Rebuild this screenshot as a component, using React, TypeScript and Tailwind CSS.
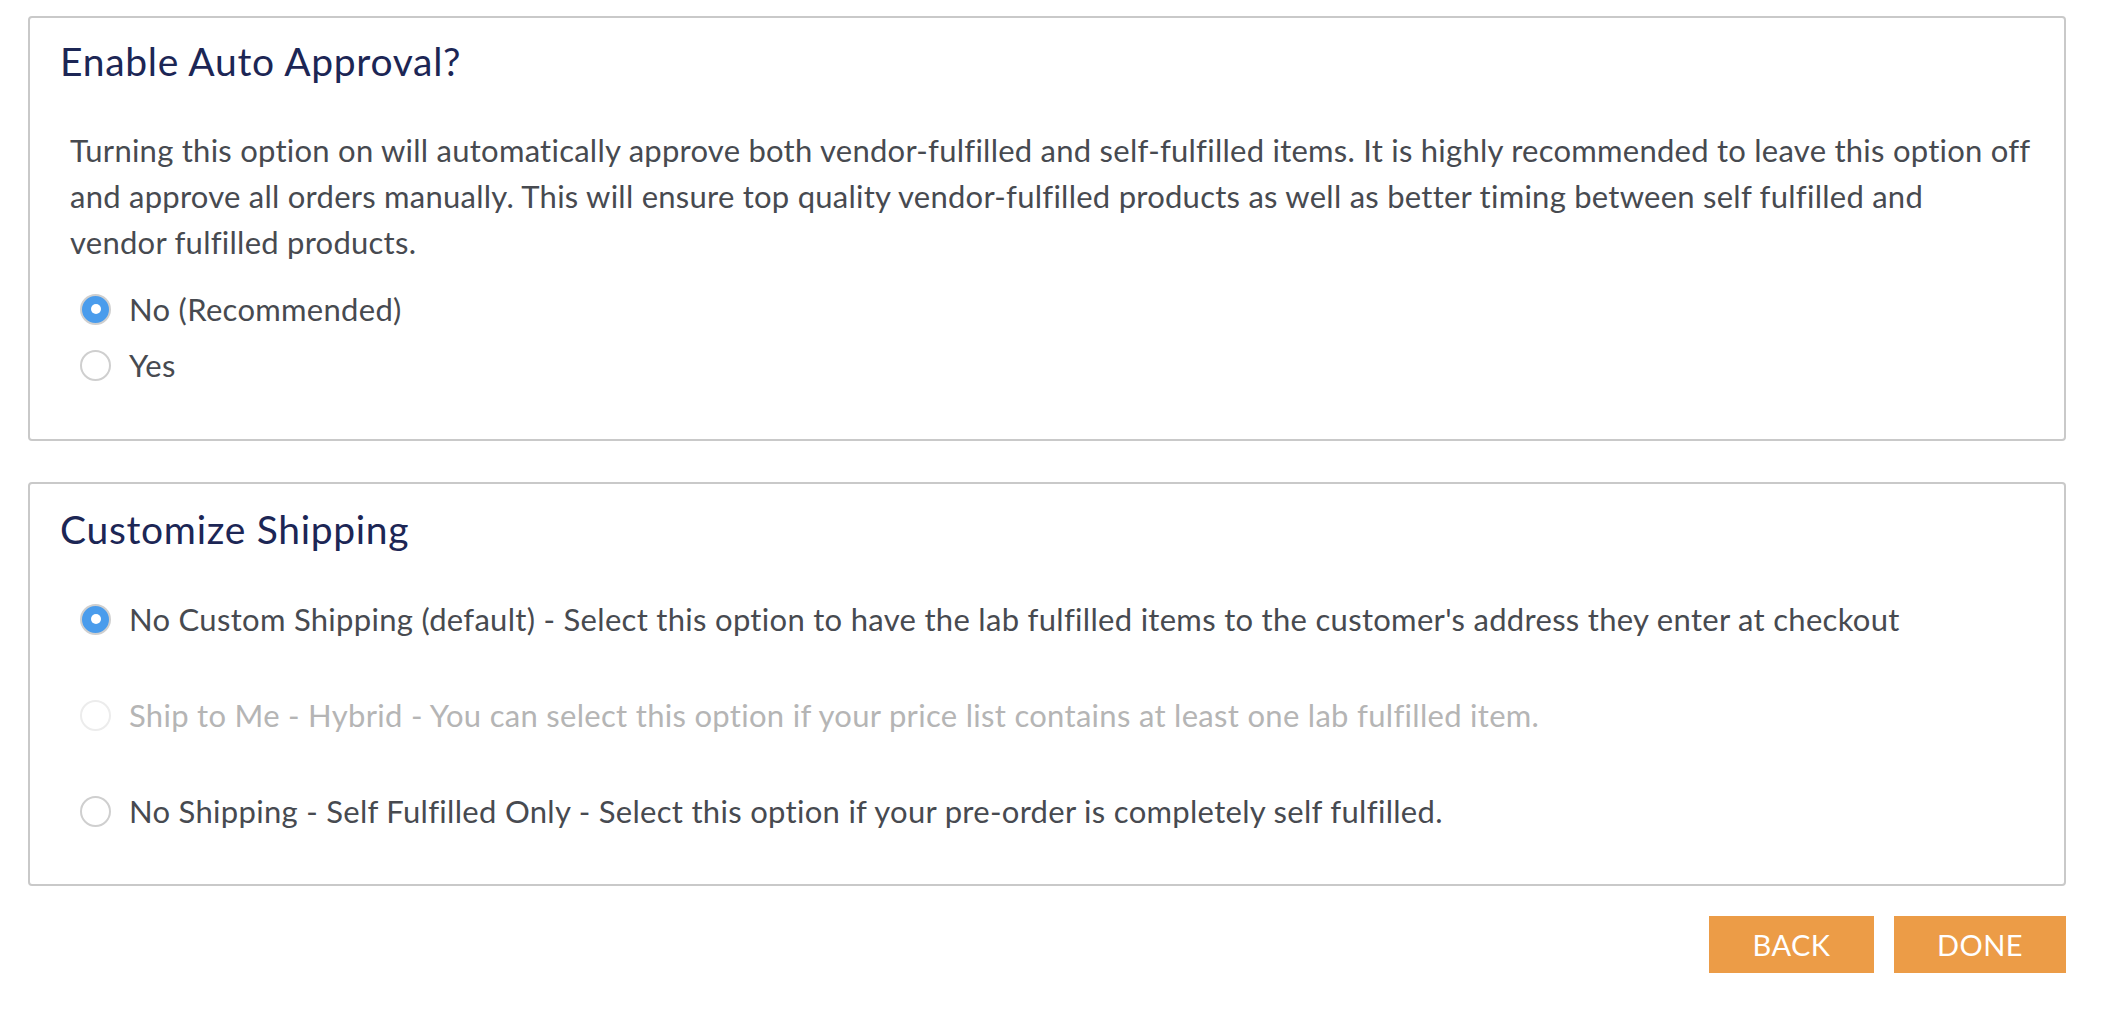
import { useState } from 'react'

type Opt = { value: string; label: string; disabled?: boolean }

function Radio({ checked, disabled }: { checked: boolean; disabled?: boolean }) {
  if (checked) {
    return (
      <span className="flex h-[31px] w-[31px] shrink-0 items-center justify-center rounded-full border-2 border-[#cfcfcf] bg-[#4a9cec]">
        <span className="h-[10px] w-[10px] rounded-full bg-white" />
      </span>
    )
  }
  return (
    <span
      className={
        disabled
          ? 'h-[31px] w-[31px] shrink-0 rounded-full border-2 border-[#ececec] bg-white'
          : 'h-[31px] w-[31px] shrink-0 rounded-full border-2 border-[#cfcfcf] bg-white'
      }
    />
  )
}

function RadioRow({ opt, checked, onPick }: { opt: Opt; checked: boolean; onPick: () => void }) {
  return (
    <label
      onClick={() => !opt.disabled && onPick()}
      className={
        opt.disabled
          ? 'ml-[20px] flex h-[56px] cursor-not-allowed items-center gap-[18px] text-[#b5b5b5]'
          : 'ml-[20px] flex h-[56px] cursor-pointer items-center gap-[18px] text-[#474a50]'
      }
    >
      <Radio checked={checked} disabled={opt.disabled} />
      <span className="whitespace-nowrap text-[31px] leading-[56px] tracking-[0.3px]">{opt.label}</span>
    </label>
  )
}

const approvalOpts: Opt[] = [
  { value: 'no', label: 'No (Recommended)' },
  { value: 'yes', label: 'Yes' },
]

const shippingOpts: Opt[] = [
  {
    value: 'none',
    label:
      "No Custom Shipping (default) - Select this option to have the lab fulfilled items to the customer's address they enter at checkout",
  },
  {
    value: 'hybrid',
    label: 'Ship to Me - Hybrid - You can select this option if your price list contains at least one lab fulfilled item.',
    disabled: true,
  },
  {
    value: 'self',
    label: 'No Shipping - Self Fulfilled Only - Select this option if your pre-order is completely self fulfilled.',
  },
]

// wrapped the same way as the live page
const approvalText = [
  'Turning this option on will automatically approve both vendor-fulfilled and self-fulfilled items. It is highly recommended to leave this option off',
  'and approve all orders manually. This will ensure top quality vendor-fulfilled products as well as better timing between self fulfilled and',
  'vendor fulfilled products.',
]

export default function App() {
  const [approval, setApproval] = useState('no')
  const [shipping, setShipping] = useState('none')

  return (
    <div className="min-h-screen bg-white pl-[28px] pr-[36px] pt-[16px] font-['Lato',sans-serif]">
      <section className="rounded-[4px] border-2 border-[#c9c9c9] px-[30px] pb-[46px] pt-[21px]">
        <h2 className="text-[39px] leading-[44px] tracking-[0.7px] text-[#1c2655]">Enable Auto Approval?</h2>
        <p className="ml-[10px] mt-[44px] text-[31px] leading-[46px] tracking-[0.25px] text-[#474a50]">
          {approvalText.map((line) => (
            <span key={line} className="block whitespace-nowrap">
              {line}
            </span>
          ))}
        </p>
        <div className="mt-[16px] flex flex-col">
          {approvalOpts.map((o) => (
            <RadioRow key={o.value} opt={o} checked={approval === o.value} onPick={() => setApproval(o.value)} />
          ))}
        </div>
      </section>

      <section className="mt-[41px] rounded-[4px] border-2 border-[#c9c9c9] px-[30px] pb-[45px] pt-[23px]">
        <h2 className="text-[39px] leading-[44px] tracking-[0.7px] text-[#1c2655]">Customize Shipping</h2>
        <div className="mt-[40px] flex flex-col gap-[40px]">
          {shippingOpts.map((o) => (
            <RadioRow key={o.value} opt={o} checked={shipping === o.value} onPick={() => setShipping(o.value)} />
          ))}
        </div>
      </section>

      <div className="mt-[30px] flex justify-end gap-[20px]">
        <button className="flex h-[57px] w-[165px] items-center justify-center bg-[#ec9c47] text-[29px] tracking-[0.5px] text-white">
          BACK
        </button>
        <button className="flex h-[57px] w-[172px] items-center justify-center bg-[#ec9c47] text-[29px] tracking-[0.5px] text-white">
          DONE
        </button>
      </div>
    </div>
  )
}
